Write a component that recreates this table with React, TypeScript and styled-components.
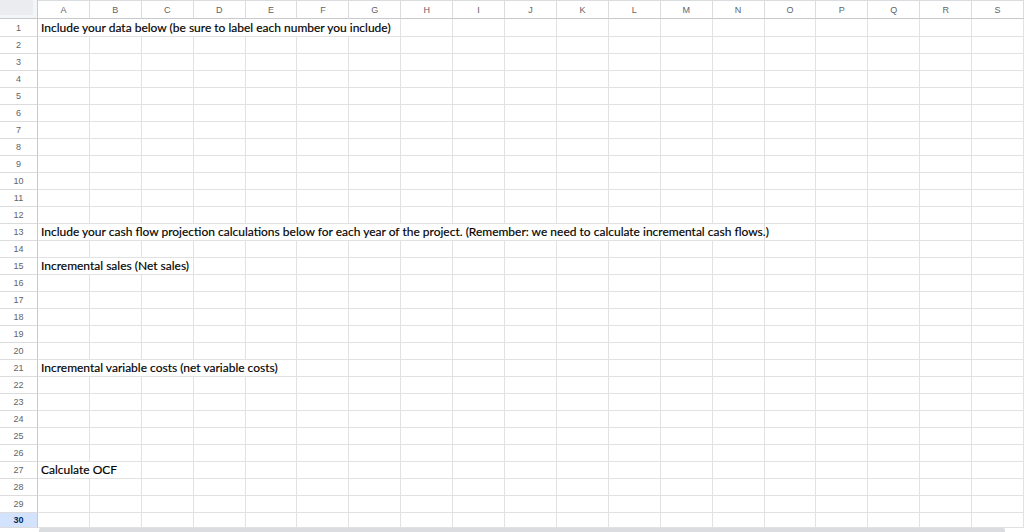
import styled, { createGlobalStyle } from "styled-components";

const COLUMNS = "ABCDEFGHIJKLMNOPQRS".split("");
const ROW_COUNT = 30;
const SELECTED_ROW = 30;

// text cells: row -> [text, columns it spills over]
const CELL_TEXT: Record<number, [string, number]> = {
  1: ["Include your data below (be sure to label each number you include)", 7],
  13: [
    "Include your cash flow projection calculations below for each year of the project. (Remember: we need to calculate incremental cash flows.)",
    14,
  ],
  15: ["Incremental sales (Net sales)", 3],
  21: ["Incremental variable costs (net variable costs)", 5],
  27: ["Calculate OCF", 2],
};

const GlobalStyle = createGlobalStyle`
  html, body {
    margin: 0;
    padding: 0;
    background: #ffffff;
  }
  * {
    box-sizing: border-box;
  }
`;

const Page = styled.div`
  width: 1024px;
  height: 532px;
  overflow: hidden;
  display: flex;
  flex-direction: column;
`;

const Grid = styled.div`
  display: grid;
  grid-template-columns: 38px repeat(19, 1fr);
  grid-template-rows: 19px 18px repeat(28, 17px) 15px;
`;

const Corner = styled.div`
  background: #f4f5f6;
  border-right: 1px solid #c7c9cc;
  border-bottom: 1px solid #c7c9cc;
  padding: 0 4px 3px 0;
`;

const CornerFill = styled.div`
  height: 100%;
  background: #eaecef;
`;

const ColHeader = styled.div`
  display: flex;
  align-items: center;
  justify-content: center;
  background: #ffffff;
  border-top: 1px solid #dadce0;
  border-right: 1px solid #dcdcdc;
  border-bottom: 1px solid #c7c9cc;
  font-family: "Liberation Sans", Arial, sans-serif;
  font-size: 9px;
  color: #5f6368;
`;

const RowHeader = styled.div<{ $selected?: boolean }>`
  display: flex;
  align-items: center;
  justify-content: center;
  background: ${(p) => (p.$selected ? "#d3e3fd" : "#ffffff")};
  border-right: 1px solid #c7c9cc;
  border-bottom: 1px solid #dcdcdc;
  font-family: "Liberation Sans", Arial, sans-serif;
  font-size: 9px;
  font-weight: ${(p) => (p.$selected ? 700 : 400)};
  color: ${(p) => (p.$selected ? "#0b2a5c" : "#5f6368")};
`;

const Cell = styled.div<{ $span?: number }>`
  grid-column: span ${(p) => p.$span || 1};
  display: flex;
  align-items: flex-end;
  padding: 0 0 2px 3px;
  border-right: 1px solid #e2e2e2;
  border-bottom: 1px solid #e2e2e2;
  white-space: nowrap;
  overflow: visible;
  font-family: Lato, "Open Sans", sans-serif;
  font-size: 12px;
  line-height: 13px;
  color: #000000;
  -webkit-text-stroke: 0.15px #000000;
`;

const ScrollTrack = styled.div`
  display: flex;
  height: 4px;
  padding: 0 19px 0 39px;
`;

const ScrollThumb = styled.div`
  flex: 1;
  background: #dadce0;
  border-radius: 2px 2px 0 0;
`;

const SheetRow = ({ row }: { row: number }) => {
  const text = CELL_TEXT[row];
  const cells = [];
  let col = 0;
  if (text) {
    cells.push(
      <Cell key="t" $span={text[1]}>
        {text[0]}
      </Cell>
    );
    col = text[1];
  }
  for (; col < COLUMNS.length; col++) {
    cells.push(<Cell key={COLUMNS[col]} />);
  }
  return (
    <>
      <RowHeader $selected={row === SELECTED_ROW}>{row}</RowHeader>
      {cells}
    </>
  );
};

const App = () => {
  const rows = Array.from({ length: ROW_COUNT }, (_, i) => i + 1);
  return (
    <>
      <GlobalStyle />
      <Page>
        <Grid>
          <Corner>
            <CornerFill />
          </Corner>
          {COLUMNS.map((c) => (
            <ColHeader key={c}>{c}</ColHeader>
          ))}
          {rows.map((r) => (
            <SheetRow key={r} row={r} />
          ))}
        </Grid>
        <ScrollTrack>
          <ScrollThumb />
        </ScrollTrack>
      </Page>
    </>
  );
};

export default App;
